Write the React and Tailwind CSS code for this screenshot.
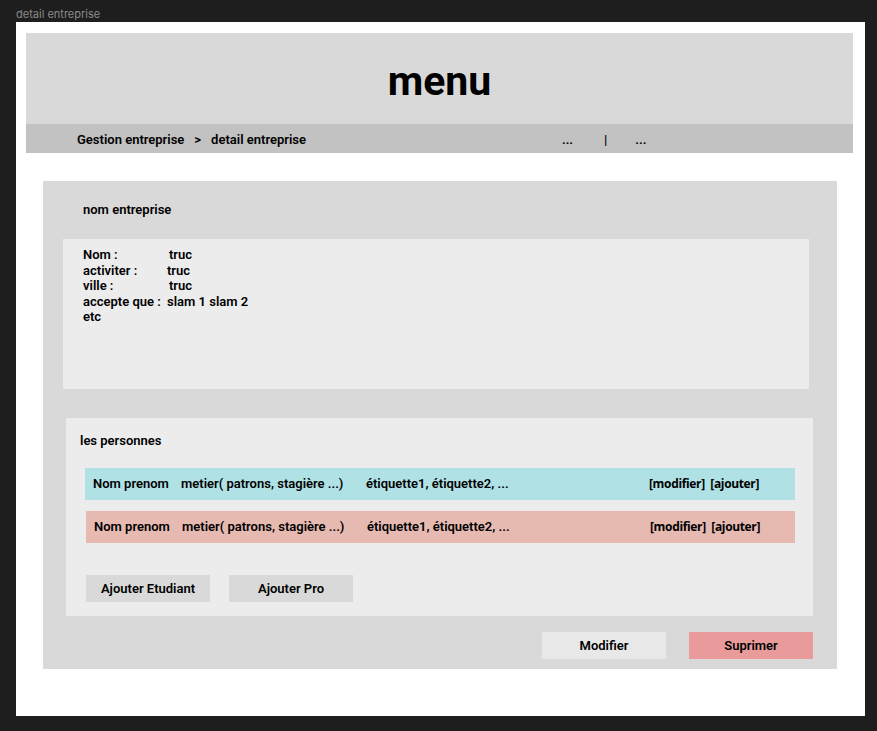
const rows = [
    { bg: "bg-[#b0e1e5]", ml: "ml-[19px] w-[710px]" },
    { bg: "bg-[#e6b9b1]", ml: "ml-[20px] w-[709px]" },
];

const infos = [
    { label: "Nom :", w: "w-[86px]", value: "truc" },
    { label: "activiter :", w: "w-[84px]", value: "truc" },
    { label: "ville :", w: "w-[86px]", value: "truc" },
    { label: "accepte que :", w: "w-[84px]", value: "slam 1 slam 2" },
];

const App = () => {
    return (
        <div className="w-[877px] h-[731px] bg-[#1e1e1e] pl-[16px] pt-[6px] font-['Roboto',sans-serif] text-black">
            <div className="text-[11px] leading-[16px] text-[#8a8a8a] font-['Inter',sans-serif]">detail entreprise</div>

            <div className="w-[849px] h-[694px] bg-white pt-[11px] pl-[10px]">
                <div className="w-[827px] h-[91px] bg-[#d9d9d9] flex items-center justify-center">
                    <h1 className="text-[41px] font-bold leading-none pt-[6px]">menu</h1>
                </div>
                <div className="w-[827px] h-[29px] bg-[#c2c2c2] flex items-center pt-[3px] text-[13px] font-semibold">
                    <span className="ml-[51px]">Gestion entreprise</span>
                    <span className="ml-[10px]">&gt;</span>
                    <span className="ml-[10px]">detail entreprise</span>
                    <span className="ml-[256px]">...</span>
                    <span className="ml-[31px]">|</span>
                    <span className="ml-[28px]">...</span>
                </div>

                <div className="mt-[28px] ml-[17px] w-[794px] h-[488px] bg-[#d9d9d9] pt-[21px] text-[13px] font-semibold">
                    <div className="pl-[40px] leading-[16px]">nom entreprise</div>

                    <div className="mt-[21px] ml-[20px] w-[746px] h-[150px] bg-[#ececec] pl-[20px] pt-[8px] leading-[15.5px]">
                        {infos.map((i) => (
                            <div key={i.label} className="flex">
                                <span className={i.w}>{i.label}</span>
                                <span>{i.value}</span>
                            </div>
                        ))}
                        <div>etc</div>
                    </div>

                    <div className="mt-[29px] ml-[23px] w-[747px] h-[198px] bg-[#ececec] pt-[15px]">
                        <div className="pl-[14px] leading-[16px]">les personnes</div>
                        <div className="mt-[19px] flex flex-col gap-[11px]">
                            {rows.map((r, idx) => (
                                <div key={idx} className={`${r.ml} ${r.bg} h-[32px] flex items-center pl-[8px]`}>
                                    <span className="w-[88px] shrink-0">Nom prenom</span>
                                    <span className="w-[185px] shrink-0">metier( patrons, stagière ...)</span>
                                    <span className="w-[283px] shrink-0">étiquette1, étiquette2, ...</span>
                                    <span className="font-['Open_Sans',sans-serif] font-bold text-[12px] tracking-[-0.35px] whitespace-pre">[modifier]  [ajouter]</span>
                                </div>
                            ))}
                        </div>
                        <div className="mt-[32px] ml-[20px] flex gap-[19px]">
                            <button className="w-[124px] h-[27px] bg-[#d9d9d9] font-semibold">Ajouter Etudiant</button>
                            <button className="w-[124px] h-[27px] bg-[#d9d9d9] font-semibold">Ajouter Pro</button>
                        </div>
                    </div>

                    <div className="mt-[16px] flex justify-end gap-[23px] pr-[24px]">
                        <button className="w-[124px] h-[27px] bg-[#e8e8e8] font-semibold">Modifier</button>
                        <button className="w-[124px] h-[27px] bg-[#e99b9b] font-semibold">Suprimer</button>
                    </div>
                </div>
            </div>
        </div>
    );
};

export default App;
